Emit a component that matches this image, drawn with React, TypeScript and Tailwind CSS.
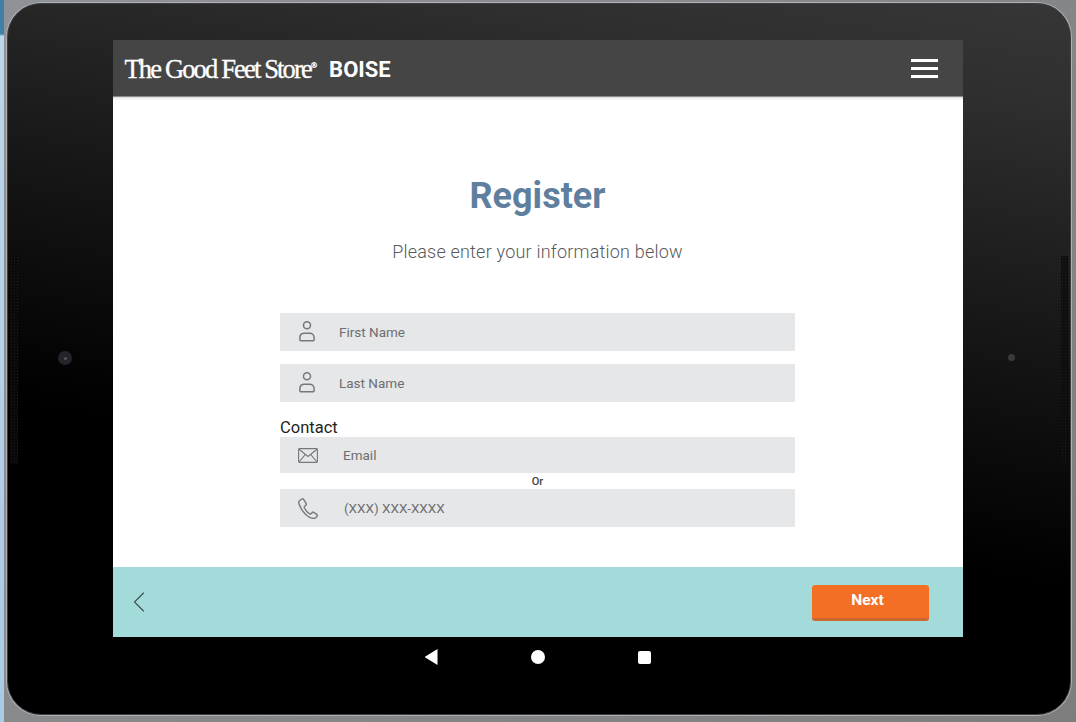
import { ChevronLeft } from 'lucide-react';

const UserIcon = () => (
  <svg width="16" height="21" viewBox="0 0 16 21" fill="none" stroke="#77787b" strokeWidth="1.5">
    <circle cx="8" cy="4.300" r="3.500" />
    <path d="M1.800 19.800h12.400a1 1 0 0 0 .9-1v-2.300c0-2.800-2.100-4.300-4.500-4.300H5.400c-2.400 0-4.500 1.500-4.500 4.300v2.300a1 1 0 0 0 .9 1z" />
  </svg>
);

const MailIcon = () => (
  <svg width="20" height="15" viewBox="0 0 20 15" fill="none" stroke="#77787b" strokeWidth="1.1">
    <rect x="0.6" y="0.6" width="18.800" height="13.800" rx="0.8" />
    <path d="M1 1.200 10 8.500l9-7.300M1 14l6.400-7.600M19 14l-6.400-7.600" />
  </svg>
);

const PhoneIcon = () => (
  <svg width="21" height="21" viewBox="0 0 21 21" fill="none" stroke="#77787b" strokeWidth="1.4" strokeLinejoin="round">
    <path d="M3.800 1 1.500 2.700C.7 3.300.6 4.500 1 5.800c1.100 3.600 3.500 7.500 6.700 10.600 2.300 2.200 5.800 4.200 8.500 3.900 1.200-.1 3.200-2 3.200-2.900 0-.5-.3-.8-.7-1.100l-3-2c-.5-.3-1-.3-1.400.1l-1.300 1.300c-.4.400-.9.400-1.400.1-2.100-1.300-4.300-3.800-5.300-6-.2-.5-.1-1 .3-1.300L8 7.100c.4-.4.500-.9.200-1.400L5.600 1.400C5.200.8 4.400.6 3.800 1z" />
  </svg>
);

function Field({ icon, label, iconBox, className }: { icon: React.ReactNode; label: string; iconBox: string; className: string }) {
  return (
    <div className={`flex items-center bg-[#e6e7e8] w-full ${className}`}>
      <div className={`flex justify-center shrink-0 ${iconBox}`}>{icon}</div>
      <span className="text-[13.500px] text-[#6d6e71]">{label}</span>
    </div>
  );
}

export default function App() {
  return (
    <div className="relative w-[1076px] h-[722px] overflow-hidden flex bg-[linear-gradient(135deg,#8f9296,#7d7d7d)] font-['Roboto',sans-serif]">
      <div className="w-[4px] shrink-0 bg-[linear-gradient(to_bottom,#3f7fa8_0,#3f7fa8_34px,#bcd6ea_36px,#a9cbe6_100%)]" />
      <div className="mt-[3px] mb-[7px] ml-[3px] mr-[5px] flex-1 relative rounded-[34px] border border-[#3c3e42] shadow-[0_0_0_1px_#aeb0b4] bg-[linear-gradient(190deg,#363636_0,#2f2f2f_100px,#161616_340px,#000_570px)] flex flex-col items-center pt-[36px] pr-[3px]">
        {/* side speakers + camera */}
        <div className="absolute left-[2px] top-[252px] w-[8px] h-[208px] bg-[#0a0a0a] bg-[radial-gradient(#262626_0.7px,transparent_0.7px)] bg-[size:3px_3px] opacity-80" />
        <div className="absolute right-[2px] top-[252px] w-[7px] h-[208px] bg-[#0c0c0c] bg-[radial-gradient(#262626_0.7px,transparent_0.7px)] bg-[size:3px_3px] opacity-80" />
        <div className="absolute left-[50px] top-[347px] w-[14px] h-[14px] rounded-full bg-[#24252b] flex items-center justify-center">
          <div className="w-[3px] h-[3px] rounded-full bg-[#55566a]" />
        </div>
        <div className="absolute right-[55px] top-[350px] w-[7px] h-[7px] rounded-full bg-[#3a3a3a]" />

        <div className="w-[850px] flex flex-col">
          <header className="h-[57px] bg-[#454545] flex items-center justify-between pl-[12px] pr-[25px] border-b border-[#888]">
            <div className="flex items-center pt-[3px]">
              <span className="font-['Liberation_Serif',serif] text-[26.500px] text-white tracking-[-1.850px] leading-none [-webkit-text-stroke:0.35px_white]">
                The Good Feet Store<span className="text-[8px] align-super">®</span>
              </span>
              <span className="ml-[14px] text-[22px] font-bold text-white leading-none">BOISE</span>
            </div>
            <div className="flex flex-col gap-[5px] w-[27px]">
              <div className="h-[3px] bg-white" />
              <div className="h-[3px] bg-white" />
              <div className="h-[3px] bg-white" />
            </div>
          </header>

          <main className="h-[470px] bg-white bg-[linear-gradient(to_bottom,#dcdcdc_0,#ffffff_3px)] flex flex-col items-center pt-[77px]">
            <h1 className="text-[36px] leading-[44px] font-bold text-[#5f7f9f]">Register</h1>
            <p className="mt-[22px] text-[18px] leading-[24px] font-light text-[#58595b] tracking-[0.21px]">Please enter your information below</p>
            <div className="mt-[49px] w-[515px] flex flex-col">
              <Field icon={<UserIcon />} label="First Name" iconBox="w-[59px] pr-[5px] pb-[1px]" className="h-[38px]" />
              <Field icon={<UserIcon />} label="Last Name" iconBox="w-[59px] pr-[5px] pb-[1px]" className="h-[38px] mt-[13px]" />
              <div className="mt-[17px] text-[16.500px] leading-[18px] text-[#231f20]">Contact</div>
              <Field icon={<MailIcon />} label="Email" iconBox="w-[63px] pr-[8px]" className="h-[36px]" />
              <div className="h-[16px] pt-[1px] text-center text-[11px] leading-[16px] font-medium text-[#414042]">Or</div>
              <Field icon={<PhoneIcon />} label="(XXX) XXX-XXXX" iconBox="w-[64px] pr-[7px]" className="h-[38px]" />
            </div>
          </main>

          <footer className="h-[70px] bg-[#a3dbda] flex items-center justify-between pl-[8px] pr-[34px]">
            <ChevronLeft size={36} strokeWidth={0.75} color="#3f4f55" />
            <button className="w-[117px] h-[36px] mt-[1px] pr-[5px] rounded-[3px] bg-[#f36f26] border-b-[3px] border-[#c9682f] text-white text-[15.500px] font-bold">
              Next
            </button>
          </footer>

          <nav className="flex justify-center items-center h-[40px] gap-[93px]">
            <div className="w-[13px] h-[16px] bg-white [clip-path:polygon(100%_0,100%_100%,0_50%)]" />
            <div className="w-[14px] h-[14px] rounded-full bg-white" />
            <div className="w-[13px] h-[13px] rounded-[2px] bg-white" />
          </nav>
        </div>
      </div>
    </div>
  );
}
